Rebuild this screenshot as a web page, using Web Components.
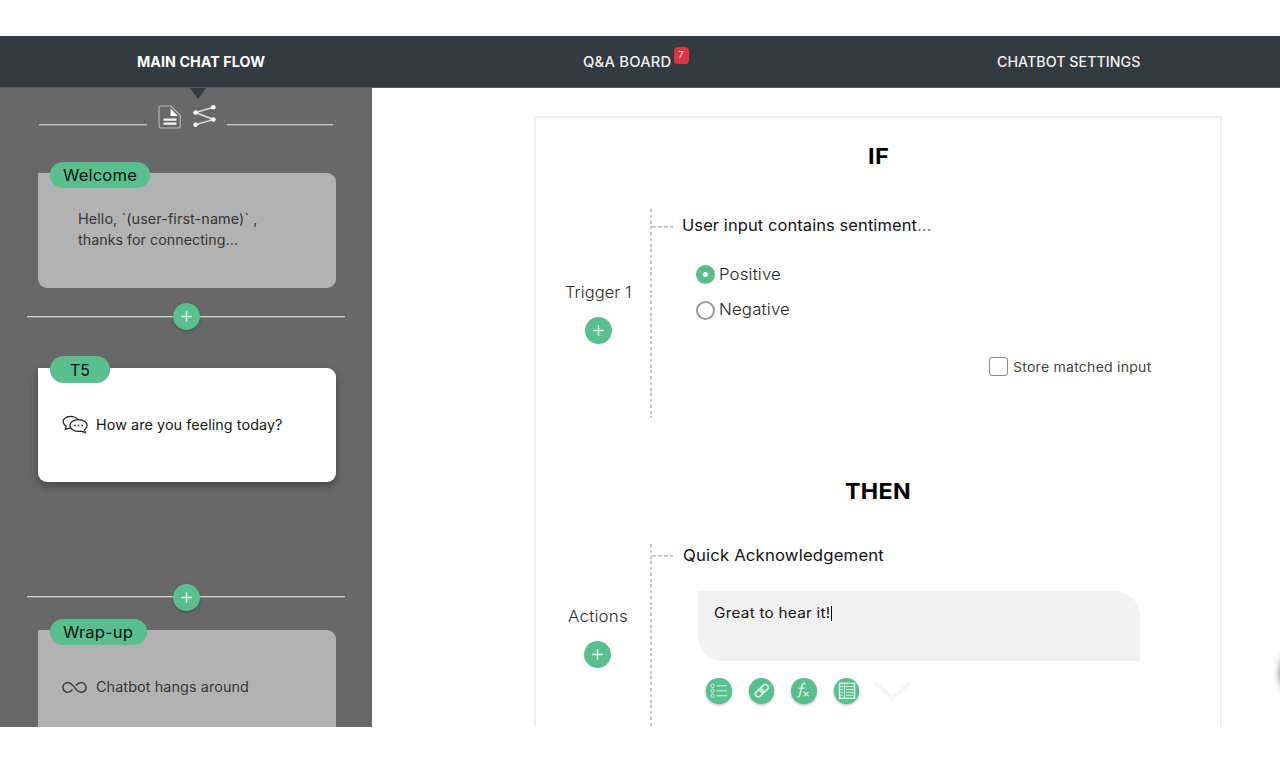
<!DOCTYPE html>
<html lang="en">
<head>
<meta charset="utf-8">
<title>Chatbot builder</title>
<style>
html,body{margin:0;padding:0;background:#fff;overflow:hidden}
body{font-family:Inter,"Liberation Sans",sans-serif;height:762px;width:1280px}
</style>
</head>
<body>
<chat-app></chat-app>
<script>
const define = (name, html, setup) => {
  const t = document.createElement('template');
  t.innerHTML = html;
  customElements.define(name, class extends HTMLElement {
    constructor() {
      super();
      this.attachShadow({mode: 'open'}).append(t.content.cloneNode(true));
    }
    connectedCallback() { if (setup) setup(this, this.shadowRoot); }
  });
};

/* One line of text, widened and tracked so that it fills the measure given in "w". */
define('fit-text', `<style>
:host{display:block;white-space:nowrap;line-height:20px;height:20px}
span{display:inline-block;white-space:pre;transform-origin:0 50%}
</style><span><slot></slot></span>`, (el, root) => {
  const s = root.querySelector('span');
  const w = +el.getAttribute('w');
  el.style.width = w + 'px';
  s.style.letterSpacing = '0px';
  s.style.transform = 'none';
  const n = el.textContent.length;
  const natural = s.getBoundingClientRect().width;
  const scale = 1 + (w / natural - 1) * .7;
  s.style.letterSpacing = ((w / scale - natural) / n).toFixed(3) + 'px';
  s.style.transform = 'scaleX(' + scale.toFixed(4) + ')';
});

define('plus-button', `<style>
:host{display:block;width:27px;height:27px;flex:none;border-radius:50%;background:#5abf8e;box-shadow:var(--plus-shadow,none)}
svg{display:block}
</style><svg width="27" height="27" viewBox="0 0 27 27"><path d="M13.5 8.2v10.6M8.2 13.5h10.6" stroke="#e6f7ee" stroke-width="1.5"/></svg>`);

define('nav-bar', `<style>
:host{display:grid;grid-template-columns:583px 413.500px 1fr;height:51px;background:#353a41;border-bottom:1px solid #55585e;color:#f1f1f2;font-size:14px;align-items:center}
.a{padding-left:137px;font-weight:700;color:#fff}
.b{display:flex;gap:2px;font-weight:500}
.c{font-weight:500}
.badge{width:15px;height:17px;margin-top:-5px;margin-bottom:1px;border-radius:4px;background:#dc3545;color:#fde;font-size:9.5px;line-height:15px;text-align:center;font-weight:400}
</style>
<div class="a"><fit-text w="128">MAIN CHAT FLOW</fit-text></div>
<div class="b"><fit-text w="88.5">Q&amp;A BOARD</fit-text><div class="badge">7</div></div>
<div class="c"><fit-text w="143.5">CHATBOT SETTINGS</fit-text></div>`);

define('flow-tools', `<style>
:host{display:flex;height:40px;padding:0 39px;position:relative}
i{height:1px;margin-top:36px;background:#c4c4c4;border-bottom:1px solid #8e8e8e;width:108px}
i:last-child{width:106px;margin-left:11px}
.doc{margin:17px 0 0 11px}.net{margin:16px 0 0 11px}
.tip{position:absolute;left:189px;top:-1px;border:9px solid transparent;border-top:12px solid #353a41;border-bottom:0}
svg{display:block;flex:none}
</style><span class="tip"></span><i></i>
<svg class="doc" width="24" height="24" viewBox="0 0 24 24"><path d="M3 1h10l9.300 9.600V20.500a2.500 2.500 0 0 1-2.500 2.500H3.500A2.500 2.500 0 0 1 1 20.500V3a2 2 0 0 1 2-2z" fill="none" stroke="#b5b5b5" stroke-width="1.200"/><path d="M12.600 3.500v7.500h7.200z" fill="#fff"/><path d="M5.500 14.700h13M5.500 18.700h13" stroke="#f4f4f4" stroke-width="2.300"/></svg>
<svg class="net" width="23" height="24" viewBox="0 0 23 24"><path d="M20.500 3.200 2.500 8.500 20.500 15.500 2.500 20.800" fill="none" stroke="#dcdcdc" stroke-width="1.600"/><g fill="#fff"><circle cx="20.300" cy="3.200" r="2.300"/><circle cx="2.600" cy="8.500" r="2.300"/><circle cx="20.300" cy="15.500" r="2.300"/><circle cx="2.600" cy="20.800" r="2.300"/></g></svg><i></i>`);

define('add-divider', `<style>
:host{display:flex;align-items:center;height:28px;margin:0 27px;--plus-shadow:0 1px 3px rgba(0,0,0,.3)}
i{flex:1;height:1px;background:#d2d2d2;border-bottom:1px solid #868686}
</style><i></i><plus-button></plus-button><i></i>`);

define('flow-card', `<style>
:host{display:block;box-sizing:border-box;margin:0 36.500px 0 38px;height:114.500px;border-radius:0 9px 9px 9px;background:#b2b2b2;color:#353535;font-size:14px;position:relative}
:host([active]){background:#fff;color:#151515;box-shadow:0 4px 8px rgba(0,0,0,.32)}
.tag{position:absolute;left:11.500px;top:-11.500px;height:26.500px;border-radius:14px;background:#5abf8e;color:#04150c;font-size:16px;line-height:26px;display:flex;align-items:center;justify-content:center;font-weight:400}
.body{display:flex;padding-top:47px;padding-left:24px}
:host([lines]) .body{display:block;padding:35px 0 0 40px}
</style><div class="tag"><slot name="tag"></slot></div><div class="body"><slot></slot></div>`,
(el, root) => { root.querySelector('.tag').style.width = el.getAttribute('tag-width') + 'px'; });

define('chat-icon', `<style>:host{display:block;width:33.500px;height:20px}svg{display:block;margin-left:-.5px}</style>
<svg width="28" height="22" viewBox="0 0 28 22" fill="none" stroke="#222" stroke-width="1.250"><path d="M8.300 12.800 3 14.300l.8-3.300C.8 9.500-.2 5.500 2.200 3.600 5 1.200 9.500 1.200 12 2q2.300.6 3.700 2.300" transform="translate(.3 0)"/><path d="M16.500 4.600c4.800 0 8.600 2.500 8.600 5.900 0 1.900-1 3.400-2.600 4.400l.8 2.900-4-1.600c-6 .9-11.300-1.700-11.300-5.600 0-3.500 3.800-6 8.500-6z"/><path d="M12.200 10.500h1.600M15.800 10.500h1.600M19.400 10.500h1.600" stroke-width="1.500"/></svg>`);

define('loop-icon', `<style>:host{display:block;width:33.500px;height:20px}svg{display:block}</style>
<svg width="25" height="20" viewBox="0 0 25 20" fill="none" stroke="#3e3e3e" stroke-width="1.500"><path d="M10.500 12.500C9 14.500 7.600 15.300 5.800 15.300a4.900 4.900 0 0 1 0-9.800c6 0 7.400 9.800 13.400 9.800a4.900 4.900 0 0 0 0-9.800c-2 0-3.500 1-5.200 3"/></svg>`);

define('flow-sidebar', `<style>
:host{display:block;width:372px;height:639px;overflow:hidden;background:#686868}
.c1{margin-top:45.400px}.d1{margin-top:15.100px}.c2{margin-top:36.800px}.d2{margin-top:101.200px}.c3{margin-top:19px}
fit-text.l{line-height:21px;height:21px}
</style>
<flow-tools></flow-tools>
<flow-card class="c1" lines tag-width="100.5"><fit-text slot="tag" w="74">Welcome</fit-text><fit-text class="l" w="179.5">Hello, \`(user-first-name)\` ,</fit-text><fit-text class="l" w="160">thanks for connecting...</fit-text></flow-card>
<add-divider class="d1"></add-divider>
<flow-card class="c2" active tag-width="60.5"><fit-text slot="tag" w="20">T5</fit-text><chat-icon></chat-icon><fit-text w="186.5">How are you feeling today?</fit-text></flow-card>
<add-divider class="d2"></add-divider>
<flow-card class="c3" tag-width="97.5"><fit-text slot="tag" w="70">Wrap-up</fit-text><loop-icon></loop-icon><fit-text w="153">Chatbot hangs around</fit-text></flow-card>`);

define('radio-option', `<style>
:host{display:flex;align-items:center;gap:4px;height:20px;font-size:16px;font-weight:300;color:#222}
i{box-sizing:border-box;width:19px;height:19px;border:2px solid #999;border-radius:50%;margin-top:2px}
:host([checked]) i{border:7px solid #5abf8e;background:#fff}
</style><i></i><slot></slot>`);

define('check-option', `<style>
:host{display:flex;align-items:center;gap:5px;height:20px;font-size:13px;font-weight:400;color:#444}
i{box-sizing:border-box;width:19px;height:19px;border:1.500px solid #888;border-radius:3px}
fit-text{margin-top:3px}
</style><i></i><slot></slot>`);

/* Heading, side label with its add button, and a dashed branch. */
define('rule-block', `<style>
:host{display:block}
h2{margin:0;font-size:22px;line-height:26px;height:26px;font-weight:700;color:#000;display:flex;justify-content:center}
.row{display:grid;grid-template-columns:113.500px 1fr;margin-top:var(--row-gap,39px)}
.side{display:flex;flex-direction:column;font-size:16px;font-weight:300;color:#2c2c2c;padding-top:var(--side-top,73px)}
.side plus-button{margin:15px 0 0 var(--plus-left,48.500px)}
.side ::slotted(*){margin-left:var(--label-left,28.500px)}
.branch{height:var(--branch,209px);background:repeating-linear-gradient(to bottom,#c6c6c6 0 3px,transparent 3px 5.760px) 0 0/2px 100% no-repeat,repeating-linear-gradient(to right,#bbb 0 4px,transparent 4px 6px) 2px var(--tick,17px)/21px 1.600px no-repeat}
</style><h2><slot name="title"></slot></h2><div class="row"><div class="side"><slot name="label"></slot><plus-button></plus-button></div><div class="branch"><slot></slot></div></div>`);

define('tool-button', `<style>
:host{display:block;width:25.500px;height:25.500px;border-radius:50%;background:#5abf8e;box-shadow:0 1px 3px rgba(0,0,0,.3);color:#d8f3e5}
svg{display:block}
</style><svg width="25.500" height="25.500" viewBox="0 0 25.500 25.500" fill="none" stroke="currentColor" stroke-width="1"></svg>`,
(el, root) => {
  root.querySelector('svg').innerHTML = {
    list: '<circle cx="6.500" cy="7.800" r="1.700"/><circle cx="6.500" cy="12.800" r="1.700"/><circle cx="6.500" cy="17.800" r="1.700"/><path d="M10.500 7.800h10.500M10.500 12.800h10.500M10.500 17.800h10.500"/>',
    link: '<g transform="rotate(-43 12.750 12.750)" stroke-width="1.700"><rect x="5" y="9.900" width="9" height="5.700" rx="2.850"/><rect x="11.500" y="9.900" width="9" height="5.700" rx="2.850"/></g>',
    fx: '<path d="M14 6.200c-.4-1.500-2.200-1-2.700.8L8.700 17.300c-.4 1.700-1.700 2.200-2.500 1.200M7.500 10.200h6" stroke-width="1.400"/><path d="m12.800 14 4.800 4.200M17.600 14l-4.800 4.200" stroke-width="1.200"/>',
    table: '<rect x="5.500" y="5.300" width="15" height="15" stroke-width="1.500"/><path d="M5.500 8.500h15M10.500 5.300v15M12 11.500h7M12 14.300h7M12 17.200h7M6.500 11.500h2.500M6.500 14.300h2.500M6.500 17.200h2.500"/>'
  }[el.getAttribute('kind')];
});

define('message-tools', `<style>
:host{display:flex;gap:17px;height:26px}
svg{display:block;margin-left:-3.500px}
</style><tool-button kind="list"></tool-button><tool-button kind="link"></tool-button><tool-button kind="fx"></tool-button><tool-button kind="table"></tool-button>
<svg width="40" height="26" viewBox="0 0 40 26"><path d="m2 4.500 17.500 16 17.500-16" fill="none" stroke="#f6f6f6" stroke-width="4"/></svg>`);

define('message-box', `<style>
:host{display:flex;box-sizing:border-box;width:442px;height:70px;padding:12px 16.500px;background:#f1f1f1;border-radius:0 25px 0 25px;font-size:14px;color:#111}
i{width:1.500px;height:15px;background:#000;margin-top:3px}
</style><slot></slot><i></i>`);

define('rule-panel', `<style>
:host{display:block;box-sizing:border-box;width:688px;height:640px;margin:28px 0 0 162px;border:2px solid #efefef;border-bottom:0;padding-top:25px}
.ifs{--row-gap:40px}
fit-text[slot=title]{line-height:26px;height:26px}
.head{font-size:16px;color:#111;display:flex}
.one{padding:6px 0 0 32.500px}
.opts{margin:28.500px 0 0 46px;display:grid;gap:15.500px}
.store{margin:37.500px 0 0 339px}
.two{--row-gap:40px;--side-top:62px;--branch:220px;--tick:11px;--label-left:32px;--plus-left:47.500px;margin-top:60px}
.box{margin:26px 0 0 48px}
.tools{margin:17px 0 0 56.500px}
.dots{color:#777}
</style>
<rule-block class="ifs"><fit-text slot="title" w="21">IF</fit-text><fit-text slot="label" w="66.500">Trigger 1</fit-text>
<div class="head one"><fit-text w="249.500">User input contains sentiment<span class="dots">...</span></fit-text></div>
<div class="opts"><radio-option checked><fit-text w="62">Positive</fit-text></radio-option><radio-option><fit-text w="71">Negative</fit-text></radio-option></div>
<div class="store"><check-option><fit-text w="138.500">Store matched input</fit-text></check-option></div>
</rule-block>
<rule-block class="two"><fit-text slot="title" w="66">THEN</fit-text><fit-text slot="label" w="60">Actions</fit-text>
<div class="head" style="padding:1px 0 0 33.500px"><fit-text w="201">Quick Acknowledgement</fit-text></div>
<message-box class="box"><fit-text w="116.500">Great to hear it!</fit-text></message-box>
<message-tools class="tools"></message-tools>
</rule-block>`);

/* Floating button parked past the right edge; only its shadow shows. */
define('help-bubble', `<style>
:host{display:block;position:absolute;left:1281px;top:644px;width:56px;height:56px;border-radius:50%;background:#fff;box-shadow:0 1px 9px rgba(0,0,0,.7)}
</style>`);

define('chat-app', `<style>
:host{display:block;position:relative;width:1280px;height:762px;overflow:hidden;padding-top:36px;box-sizing:border-box;background:#fff}
main{display:flex;height:639px;overflow:hidden}
rule-panel{flex:none}
</style><nav-bar></nav-bar><main><flow-sidebar></flow-sidebar><rule-panel></rule-panel></main><help-bubble></help-bubble>`);
</script>
</body>
</html>
